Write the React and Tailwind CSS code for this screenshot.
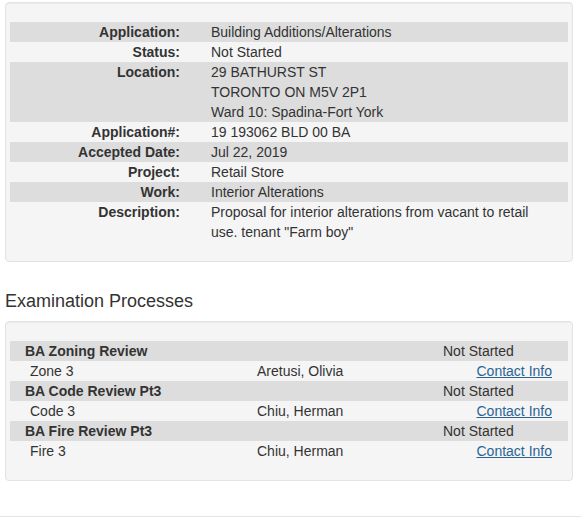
export default function App() {
  const details = [
    { label: "Application:", lines: ["Building Additions/Alterations"] },
    { label: "Status:", lines: ["Not Started"] },
    { label: "Location:", lines: ["29 BATHURST ST", "TORONTO ON M5V 2P1", "Ward 10: Spadina-Fort York"] },
    { label: "Application#:", lines: ["19 193062 BLD 00 BA"] },
    { label: "Accepted Date:", lines: ["Jul 22, 2019"] },
    { label: "Project:", lines: ["Retail Store"] },
    { label: "Work:", lines: ["Interior Alterations"] },
    {
      label: "Description:",
      lines: ['Proposal for interior alterations from vacant to retail use. tenant "Farm boy"'],
    },
  ];

  const processes = [
    { name: "BA Zoning Review", status: "Not Started", sub: "Zone 3", person: "Aretusi, Olivia" },
    { name: "BA Code Review Pt3", status: "Not Started", sub: "Code 3", person: "Chiu, Herman" },
    { name: "BA Fire Review Pt3", status: "Not Started", sub: "Fire 3", person: "Chiu, Herman" },
  ];

  return (
    <div className="w-[581px] h-[520px] bg-white text-[#333] text-[14px] leading-[20px] font-['Liberation_Sans',Arial,sans-serif] pt-[2px] overflow-hidden">
      {/* application details */}
      <div className="ml-[5px] w-[568px] rounded-[4px] border border-[#e3e3e3] bg-[#f5f5f5] shadow-[inset_0_1px_1px_rgba(0,0,0,0.05)] px-[4px] py-[19px]">
        <div className="flex flex-col">
          {details.map((d, i) => (
            <div key={d.label} className={`grid grid-cols-[170px_1fr] ${i % 2 === 0 ? "bg-[#dddddd]" : ""}`}>
              <div className="text-right font-bold">{d.label}</div>
              <div className="pl-[31px] pr-[20px]">
                {d.lines.map((l) => (
                  <div key={l}>{l}</div>
                ))}
              </div>
            </div>
          ))}
        </div>
      </div>

      <h4 className="mt-[29px] mb-[10px] ml-[5px] text-[18px] leading-[20px] font-normal">Examination Processes</h4>

      {/* examination processes */}
      <div className="ml-[5px] w-[568px] rounded-[4px] border border-[#e3e3e3] bg-[#f5f5f5] shadow-[inset_0_1px_1px_rgba(0,0,0,0.05)] px-[4px] py-[19px]">
        <div className="flex flex-col">
          {processes.map((p) => (
            <div key={p.name} className="flex flex-col">
              <div className="grid grid-cols-[433px_1fr] bg-[#dddddd]">
                <div className="pl-[15px] font-bold">{p.name}</div>
                <div>{p.status}</div>
              </div>
              <div className="grid grid-cols-[247px_186px_1fr]">
                <div className="pl-[20px]">{p.sub}</div>
                <div>{p.person}</div>
                <div className="text-right pr-[16px]">
                  <a href="#" className="text-[#2a6496] underline">
                    Contact Info
                  </a>
                </div>
              </div>
            </div>
          ))}
        </div>
      </div>

      <div className="mt-[35px] border-t border-[#e5e5e5]" />
    </div>
  );
}
